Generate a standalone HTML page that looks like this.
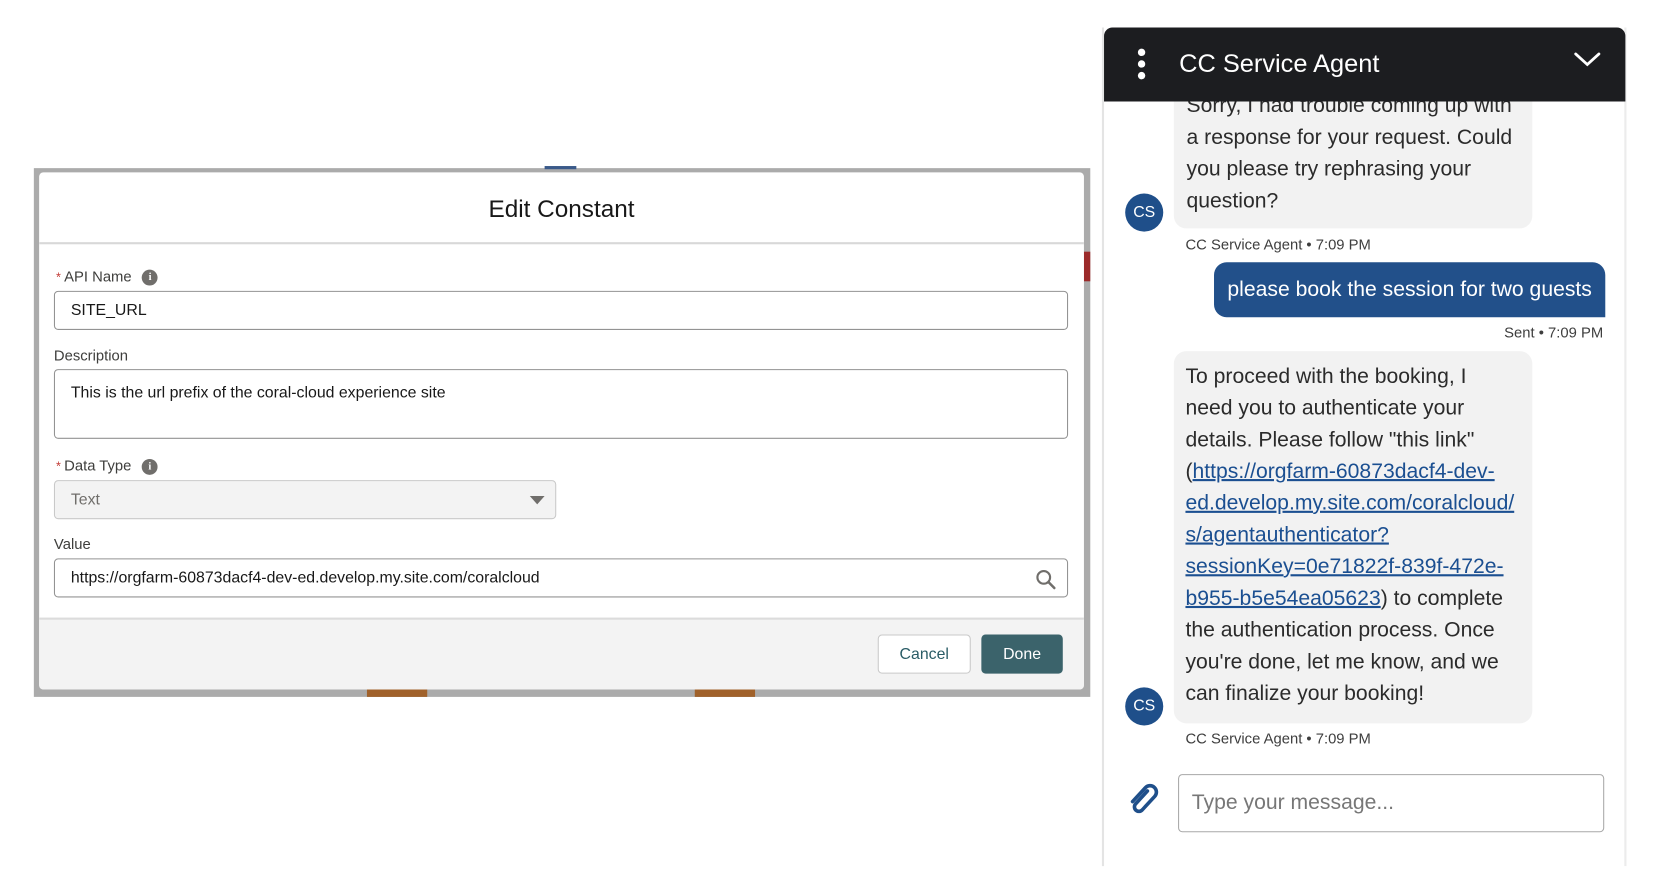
<!DOCTYPE html>
<html><head><meta charset="utf-8"><style>
*{box-sizing:border-box;margin:0;padding:0}
html,body{width:1658px;height:894px;overflow:hidden;background:#fff;font-family:"Liberation Sans",Arial,sans-serif;color:#181818}
#w{position:absolute;left:0;top:0;width:1571px;height:847px;transform:scale(1.0575);transform-origin:0 0}
.a{position:absolute}
.lbl{font-size:14px;color:#3e3e3c}
.req{color:#c23934;font-size:12px;margin-right:3px}
.info{display:inline-block;width:15px;height:15px;border-radius:50%;background:#706e6b;color:#fff;font-size:10px;font-weight:bold;text-align:center;line-height:15px;vertical-align:1px;margin-left:10px;font-family:"Liberation Serif",serif}
.inp{position:absolute;border:1px solid #939393;border-radius:4px;background:#fff;font-size:15px;padding-left:15px;color:#181818}
.msg{font-size:20px;line-height:30px;color:#2b2b2b}
.msg a{color:#1b4f91;text-decoration:underline}
.av{position:absolute;width:36px;height:36px;border-radius:50%;background:#1f4f8a;color:#fff;font-size:15px;text-align:center;line-height:36px}
.meta{position:absolute;font-size:14px;color:#3e3e3e}
</style></head><body><div id="w">
<div class="a" style="left:32px;top:159px;width:999px;height:500px;background:#ababab"></div>
<div class="a" style="left:515px;top:157px;width:30px;height:3px;background:#3a5a8a"></div>
<div class="a" style="left:1025px;top:238px;width:6px;height:28px;background:#9b2a2a"></div>
<div class="a" style="left:347px;top:652px;width:57px;height:7px;background:#a0612a"></div>
<div class="a" style="left:657px;top:652px;width:57px;height:7px;background:#a0612a"></div>
<div class="a" style="left:37px;top:163px;width:988px;height:489px;background:#fff;border-radius:4px;overflow:hidden">
 <div class="a" style="left:0;top:0;width:988px;height:68px;border-bottom:2px solid #d8d8d8;text-align:center;font-size:23px;line-height:68px;color:#181818">Edit Constant</div>
 <div class="a lbl" style="left:16px;top:90px"><span class="req">*</span>API Name<span class="info">i</span></div>
 <div class="inp" style="left:14px;top:112px;width:959px;height:37px;line-height:35px">SITE_URL</div>
 <div class="a lbl" style="left:14px;top:165px">Description</div>
 <div class="inp" style="left:14px;top:186px;width:959px;height:66px;padding-top:13px">This is the url prefix of the coral-cloud experience site</div>
 <div class="a lbl" style="left:16px;top:269px"><span class="req">*</span>Data Type<span class="info">i</span></div>
 <div class="inp" style="left:14px;top:291px;width:475px;height:37px;line-height:35px;background:#f3f3f3;border-color:#c9c9c9;color:#706e6b">Text
  <div class="a" style="right:10px;top:14px;width:0;height:0;border-left:7px solid transparent;border-right:7px solid transparent;border-top:8px solid #706e6b"></div></div>
 <div class="a lbl" style="left:14px;top:343px">Value</div>
 <div class="inp" style="left:14px;top:365px;width:959px;height:37px;line-height:35px">https://orgfarm-60873dacf4-dev-ed.develop.my.site.com/coralcloud
  <svg class="a" style="right:10px;top:9px" width="20" height="20" viewBox="0 0 20 20"><circle cx="8" cy="8" r="6" fill="none" stroke="#706e6b" stroke-width="2"/><path d="M12.5 12.5L18 18" stroke="#706e6b" stroke-width="2.4" stroke-linecap="round"/></svg></div>
 <div class="a" style="left:0;top:421px;width:988px;height:68px;background:#f3f3f3;border-top:2px solid #dcdcdc"></div>
 <div class="a" style="left:793px;top:437px;width:88px;height:37px;border:1px solid #c9c9c9;border-radius:4px;background:#fff;color:#2a5c66;font-size:15px;text-align:center;line-height:35px">Cancel</div>
 <div class="a" style="left:891px;top:437px;width:77px;height:37px;border-radius:4px;background:#3b636b;color:#fff;font-size:15px;text-align:center;line-height:37px">Done</div>
</div>
<div class="a" style="left:1042px;top:26px;width:496px;height:793px;background:#fff;border-left:2px solid #e4e4e4;border-right:2px solid #ececec;overflow:hidden">
 <div class="a msg" style="left:66px;top:55px;width:339px;height:135px;background:#f2f2f2;border-radius:0 0 12px 12px;padding:4px 0 0 12px">Sorry, I had trouble coming up with<br>a response for your request. Could<br>you please try rephrasing your<br>question?</div>
 <div class="av" style="left:20px;top:157px">CS</div>
 <div class="meta" style="left:77px;top:197px">CC Service Agent • 7:09 PM</div>
 <div class="a" style="left:104px;top:222px;width:370px;height:52px;background:#22508a;border-radius:12px 12px 0 12px;color:#fff;font-size:20px;line-height:52px;text-align:center">please book the session for two guests</div>
 <div class="meta" style="right:20px;top:280px">Sent • 7:09 PM</div>
 <div class="a msg" style="left:66px;top:306px;width:339px;height:352px;background:#f2f2f2;border-radius:12px;padding:9px 0 0 11px">To proceed with the booking, I<br>need you to authenticate your<br>details. Please follow "this link"<br>(<a>https://orgfarm-60873dacf4-dev-</a><br><a>ed.develop.my.site.com/coralcloud/</a><br><a>s/agentauthenticator?</a><br><a>sessionKey=0e71822f-839f-472e-</a><br><a>b955-b5e54ea05623</a>) to complete<br>the authentication process. Once<br>you're done, let me know, and we<br>can finalize your booking!</div>
 <div class="av" style="left:20px;top:624px">CS</div>
 <div class="meta" style="left:77px;top:664px">CC Service Agent • 7:09 PM</div>
 <svg class="a" style="left:22px;top:714px" width="32" height="34" viewBox="0 0 32 34"><path d="M19 8L8 20a4 4 0 0 0 6 6L26 13a6 6 0 0 0-9-8L5 18" fill="none" stroke="#1f4f8a" stroke-width="3.4" stroke-linecap="round"/></svg>
 <div class="a" style="left:70px;top:706px;width:403px;height:55px;border:1px solid #a8a8a8;border-radius:4px;font-size:20px;color:#777;line-height:53px;padding-left:12px">Type your message...</div>
</div>
<div class="a" style="left:1044px;top:26px;width:493px;height:70px;background:#1c1d20;border-radius:8px 8px 0 0">
 <div class="a" style="left:32px;top:20px;width:7px;height:7px;border-radius:50%;background:#fff"></div>
 <div class="a" style="left:32px;top:31px;width:7px;height:7px;border-radius:50%;background:#fff"></div>
 <div class="a" style="left:32px;top:42px;width:7px;height:7px;border-radius:50%;background:#fff"></div>
 <div class="a" style="left:71px;top:21px;font-size:24px;color:#fff">CC Service Agent</div>
 <svg class="a" style="left:444px;top:22px" width="26" height="16" viewBox="0 0 26 16"><path d="M2 3L13 13L24 3" fill="none" stroke="#fff" stroke-width="2.6" stroke-linecap="round"/></svg>
</div>
</div></body></html>
